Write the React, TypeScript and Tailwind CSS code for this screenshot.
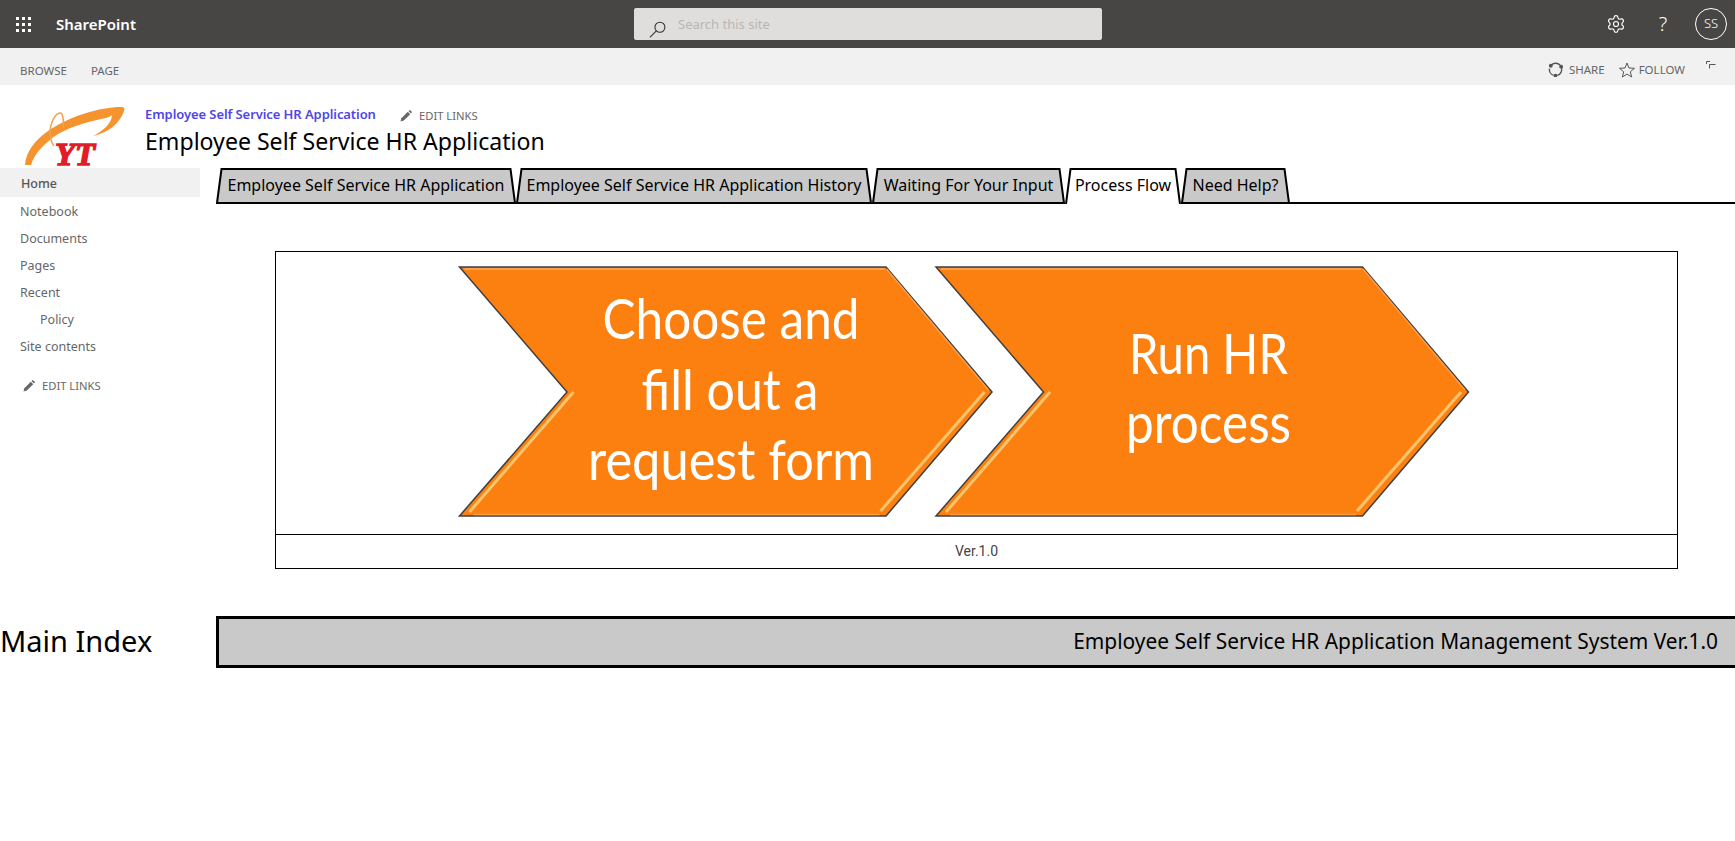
import { Settings } from "lucide-react";

const tabs = [
    { label: "Employee Self Service HR Application", w: 300, cls: "w-[300px]" },
    { label: "Employee Self Service HR Application History", w: 356, cls: "w-[356px]" },
    { label: "Waiting For Your Input", w: 193, cls: "w-[193px]" },
    { label: "Process Flow", w: 116, cls: "w-[116px]", active: true },
    { label: "Need Help?", w: 109, cls: "w-[109px]" },
];

const navItems = ["Notebook", "Documents", "Pages", "Recent"];

function Pencil({ className }: { className?: string }) {
    return (
        <svg viewBox="0 0 12 12" className={className} fill="currentColor">
            <path d="M0.5 11.5 L1.4 8.2 L7.8 1.8 L10.2 4.2 L3.8 10.6 Z" />
            <path d="M8.5 1.1 L9.4 0.3 Q9.9 0 10.4 0.4 L11.6 1.6 Q12 2.1 11.7 2.6 L10.9 3.5 Z" />
        </svg>
    );
}

function Logo() {
    return (
        <svg viewBox="0 85 145 83" className="w-[145px] h-[83px] shrink-0 overflow-visible">
            <path
                d="M121 107 C 100 107, 70 116, 48 131 C 34 141, 26 152, 25 165 L 31 165 C 35 152, 46 142, 58 134 C 72 126, 90 121, 106 118 C 109 117, 111 116, 112 115 C 112 123, 103 131, 93 136 C 108 133, 120 123, 124 111 C 125 108, 124 107, 121 107 Z"
                fill="#f5942f"
            />
            <path
                d="M63 128 C 64 120, 63 113, 60 113 C 55 113, 50 124, 50 132 C 50 138, 51 142, 54 146"
                fill="none"
                stroke="#f5a04a"
                strokeWidth="1.5"
            />
            <text
                x="55"
                y="164.5"
                fontFamily="Liberation Serif, serif"
                fontWeight="700"
                fontStyle="italic"
                fontSize="32"
                fill="#e21c26"
                stroke="#e21c26"
                strokeWidth="1.4"
                textLength="40"
                lengthAdjust="spacingAndGlyphs"
            >
                YT
            </text>
        </svg>
    );
}

function Chevron({ x }: { x: number }) {
    const pts = `${x},267 ${x + 426.5},267 ${x + 532.5},392 ${x + 426.5},516 ${x},516 ${x + 107.5},392`;
    return (
        <g>
            <polygon points={pts} fill="#fb8010" stroke="#3f3f3f" strokeWidth="1.5" />
            <path d={`M${x + 5} 269 H${x + 425}`} stroke="#fdab66" strokeWidth="1.5" />
            <path d={`M${x + 427} 269 L${x + 529} 390`} stroke="#fd9c45" strokeWidth="1.5" />
            <path d={`M${x + 10} 512 L${x + 114} 392`} stroke="#fcc46c" strokeWidth="3" />
            <path d={`M${x + 421} 511 L${x + 525} 392`} stroke="#fcc46c" strokeWidth="3" />
            <path d={`M${x + 14} 514.5 H${x + 420}`} stroke="#fd9c45" strokeWidth="1.5" />
        </g>
    );
}

function ProcessArt() {
    return (
        <svg viewBox="276 252 1400 282" className="block w-[1400px] h-[282px]">
            <Chevron x={459.5} />
            <Chevron x={936} />
            <g fontFamily="Lato, sans-serif" fontSize="57" fill="#ffffff" textAnchor="middle">
                <text x="731" y="339" textLength="257" lengthAdjust="spacingAndGlyphs">Choose and</text>
                <text x="730" y="410" textLength="177" lengthAdjust="spacingAndGlyphs">fill out a</text>
                <text x="731" y="480" textLength="286" lengthAdjust="spacingAndGlyphs">request form</text>
                <text x="1208.5" y="374" textLength="159" lengthAdjust="spacingAndGlyphs">Run HR</text>
                <text x="1208.5" y="443" textLength="165" lengthAdjust="spacingAndGlyphs">process</text>
            </g>
        </svg>
    );
}

export default function App() {
    return (
        <div className="min-h-[841px] bg-white font-['Noto_Sans',sans-serif] overflow-hidden">
            {/* top bar */}
            <header className="h-12 bg-[#484644] flex items-center relative">
                <div className="ml-4 grid grid-cols-3 gap-[3px] w-[15px]">
                    {Array.from({ length: 9 }).map((_, i) => (
                        <span key={i} className="w-[3px] h-[3px] bg-white" />
                    ))}
                </div>
                <span className="ml-[25px] text-white text-[15px] font-semibold">SharePoint</span>
                <div className="absolute left-[634px] top-2 w-[468px] h-8 rounded-[2px] bg-[#dfdedc] overflow-hidden flex items-center pl-[44px] pt-[2px]">
                    <svg viewBox="0 0 22 22" className="absolute left-[15px] top-[12px] w-5 h-5" fill="none" stroke="#333" strokeWidth="1.2">
                        <circle cx="12" cy="8" r="5.5" />
                        <path d="M8 12 L1 19" />
                    </svg>
                    <span className="text-[13px] text-[#b9b6b3]">Search this site</span>
                </div>
                <div className="ml-auto flex items-center">
                    <Settings className="w-5 h-5 text-white" strokeWidth={1.4} />
                    <span className="ml-[30px] w-[14px] text-center text-white text-[20px] font-light leading-none">?</span>
                    <div className="ml-[25px] mr-[8px] w-8 h-8 rounded-full border border-white text-white text-[13px] font-light flex items-center justify-center">
                        SS
                    </div>
                </div>
            </header>

            {/* ribbon */}
            <div className="h-[37px] bg-[#f1f1f1] flex items-center pl-5 text-[11.5px] text-[#666666]">
                <span className="mt-[9px]">BROWSE</span>
                <span className="ml-6 mt-[9px]">PAGE</span>
                <div className="ml-auto mt-[6px] flex items-center">
                    <svg viewBox="0 0 16 16" className="w-[15px] h-[15px]" fill="none" stroke="#555" strokeWidth="1.5">
                        <path d="M3 4 A6.5 6.5 0 0 1 13 3.5" />
                        <path d="M14.3 6 A6.5 6.5 0 0 1 10 14.3" />
                        <path d="M6 14.3 A6.5 6.5 0 0 1 1.6 7" />
                        <circle cx="3" cy="4" r="1.3" fill="#555" />
                        <circle cx="14" cy="5" r="1.3" fill="#555" />
                        <circle cx="8" cy="14.5" r="1.3" fill="#555" />
                    </svg>
                    <span className="ml-[6px]">SHARE</span>
                    <svg viewBox="0 0 16 16" className="ml-[14px] w-4 h-4" fill="none" stroke="#555" strokeWidth="1">
                        <path d="M8 1 L10 6 L15.5 6.3 L11.3 9.8 L12.7 15 L8 12.1 L3.3 15 L4.7 9.8 L0.5 6.3 L6 6 Z" />
                    </svg>
                    <span className="ml-[4px]">FOLLOW</span>
                    <svg viewBox="0 0 10 10" className="ml-[21px] mr-[19px] mb-2 w-[10px] h-[10px]" fill="none" stroke="#555" strokeWidth="1">
                        <path d="M0.5 3 V0.5 H4 M3.5 7.5 V3.5 H9.5" />
                    </svg>
                </div>
            </div>

            {/* site title */}
            <div className="flex h-[83px]">
                <Logo />
                <div className="pt-[19px]">
                    <div className="flex items-center h-[22px]">
                        <span className="w-[231px] text-[13px] font-semibold text-[#4f46e5] whitespace-nowrap tracking-[-0.08px]">
                            Employee Self Service HR Application
                        </span>
                        <Pencil className="ml-[24px] mt-[2px] w-3 h-3 text-[#666666]" />
                        <span className="ml-[7px] mt-[2px] text-[11.2px] text-[#666666]">EDIT LINKS</span>
                    </div>
                    <h1 className="text-[23.1px] leading-[30px] text-black whitespace-nowrap">
                        Employee Self Service HR Application
                    </h1>
                </div>
            </div>

            <div className="flex">
                {/* side nav */}
                <nav className="w-[200px] shrink-0 text-[12.5px] text-[#666666]">
                    <div className="h-[29px] bg-[#f1f1f1] pl-[21px] pt-1 flex items-center font-medium text-[#555555]">Home</div>
                    <ul className="pt-[2px]">
                        {navItems.map((item) => (
                            <li key={item} className="h-[27px] pl-5 flex items-center">{item}</li>
                        ))}
                        <li className="h-[27px] pl-10 flex items-center">Policy</li>
                        <li className="h-[27px] pl-5 flex items-center">Site contents</li>
                    </ul>
                    <div className="mt-[17px] pl-[23px] flex items-center">
                        <Pencil className="w-3 h-3" />
                        <span className="ml-[7px] text-[11.2px]">EDIT LINKS</span>
                    </div>
                </nav>

                {/* main */}
                <main className="flex-1 min-w-0">
                    <div className="flex h-9 pl-4">
                        {tabs.map((t) => (
                            <div key={t.label} className={`${t.cls} relative flex items-center justify-center shrink-0 pb-[2px]`}>
                                <svg viewBox={`0 0 ${t.w} 36`} className="absolute inset-0 w-full h-full">
                                    <polygon
                                        points={`1,35 5.5,1 ${t.w - 5.5},1 ${t.w - 1},35`}
                                        fill={t.active ? "#ffffff" : "#c9c9c9"}
                                    />
                                    <path
                                        d={
                                            t.active
                                                ? `M1 36 L5.5 1 H${t.w - 5.5} L${t.w - 1} 36`
                                                : `M1 35 L5.5 1 H${t.w - 5.5} L${t.w - 1} 35 Z`
                                        }
                                        fill="none"
                                        stroke="#000000"
                                        strokeWidth="2"
                                    />
                                </svg>
                                <span className="relative text-[16px] text-black whitespace-nowrap">{t.label}</span>
                            </div>
                        ))}
                        <div className="flex-1 border-b-2 border-black" />
                    </div>

                    <div className="mt-[47px] ml-[75px] w-[1403px] border border-black">
                        <ProcessArt />
                        <div className="h-[34px] border-t border-black flex items-center justify-center text-[14px] text-[#444444] font-['Roboto',sans-serif]">
                            Ver.1.0
                        </div>
                    </div>
                </main>
            </div>

            {/* footer strip */}
            <div className="mt-[47px] flex items-center">
                <div className="w-[216px] shrink-0 pb-[2px] text-[29px] text-black whitespace-nowrap">Main Index</div>
                <div className="flex-1 h-[52px] bg-[#c9c9c9] border-[3px] border-black border-r-0 flex items-center justify-end pr-[17px] text-[20.9px] text-black whitespace-nowrap">
                    Employee Self Service HR Application Management System Ver.1.0
                </div>
            </div>
        </div>
    );
}
